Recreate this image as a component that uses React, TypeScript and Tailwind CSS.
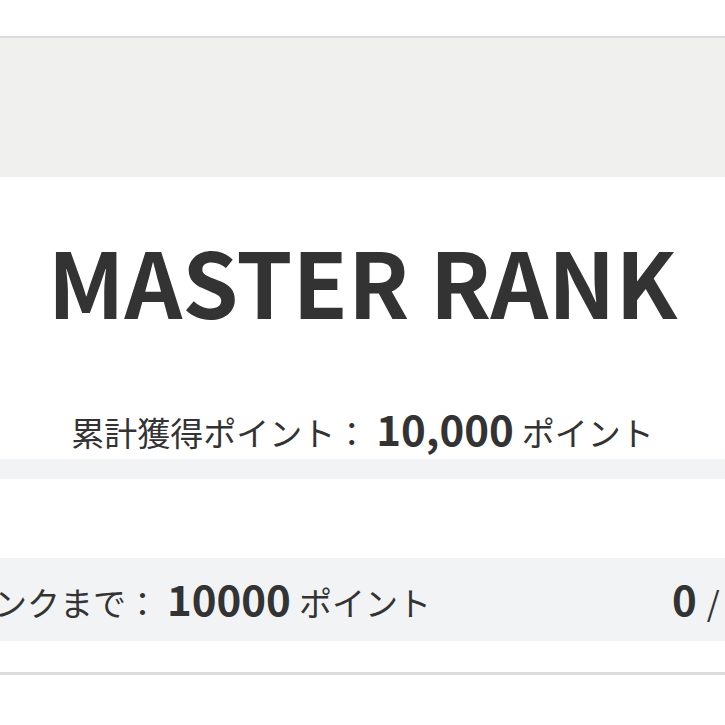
import React from "react";

export default function App() {
  const font = { fontFamily: '"Noto Sans CJK JP", "Noto Sans", sans-serif' };
  return (
    <div className="w-[725px] h-[725px] overflow-hidden bg-white text-[#333]" style={font}>
      <div className="h-[36px] bg-white" />
      <div className="h-[2px] bg-[#dcdcdc]" />
      <div className="h-[139px] bg-[#f0f0ef]" />
      <div className="h-[282px] bg-white flex flex-col items-center">
        <div className="mt-[43px] h-[120px] flex items-center text-[90px] font-bold leading-none whitespace-nowrap">
          MASTER RANK
        </div>
        <div className="mt-[56px] flex items-baseline whitespace-nowrap">
          <span className="text-[33px]">累計獲得ポイント：</span>
          <span className="ml-[8px] text-[42px] font-bold">10,000</span>
          <span className="ml-[8px] text-[33px]">ポイント</span>
        </div>
      </div>
      <div className="h-[20px] bg-[#f2f3f5]" />
      <div className="h-[79px] bg-white" />
      <div className="h-[83px] bg-[#f2f3f5] flex items-center overflow-hidden">
        <div className="flex items-baseline whitespace-nowrap -ml-[105px] w-[777px] shrink-0 -mt-[5px]">
          <span className="text-[33px]">次のランクまで：</span>
          <span className="ml-[8px] text-[42px] font-bold">10000</span>
          <span className="ml-[8px] text-[33px]">ポイント</span>
        </div>
        <div className="flex items-baseline whitespace-nowrap shrink-0 -mt-[5px]">
          <span className="text-[42px] font-bold">0</span>
          <span className="ml-[10px] text-[33px]">/ 10000</span>
        </div>
      </div>
      <div className="h-[31px] bg-white" />
      <div className="h-[3px] bg-[#dcdcdc]" />
      <div className="h-[50px] bg-white" />
    </div>
  );
}
